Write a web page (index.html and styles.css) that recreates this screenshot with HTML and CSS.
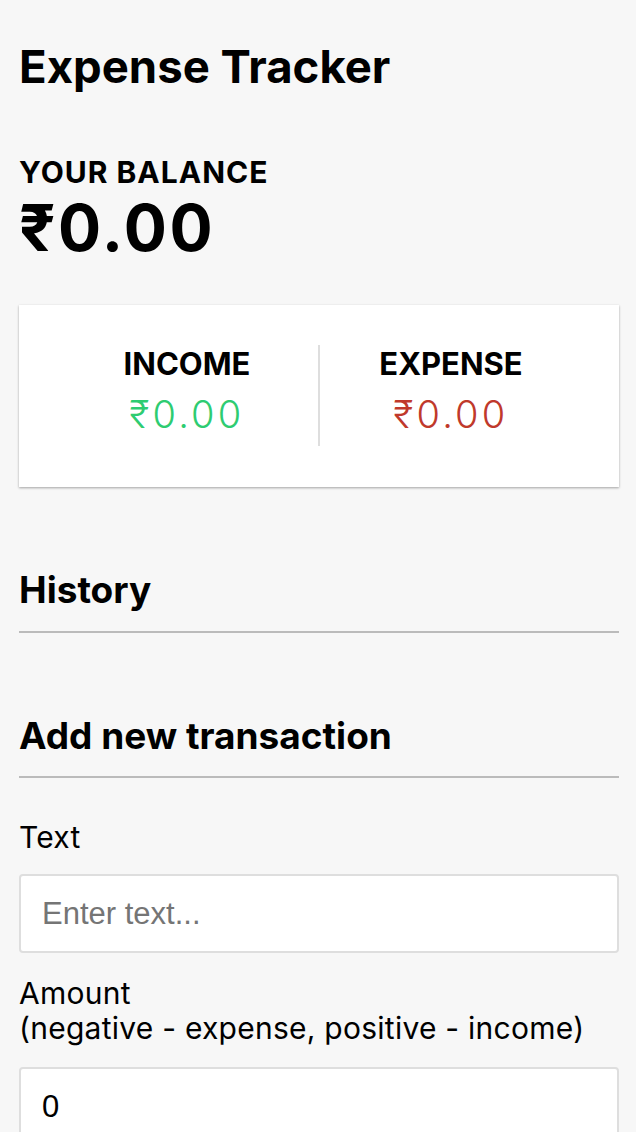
FILE: index.html
```html
<!DOCTYPE html>
<html lang="en">
<head>
<meta charset="UTF-8">
<title>Expense Tracker</title>
<link rel="stylesheet" href="styles.css">
</head>
<body>
<div class="container">
  <h1 class="title">Expense Tracker</h1>
  <h4 class="balance-label">Your Balance</h4>
  <div class="balance">₹0.00</div>
  <div class="inc-exp">
    <div class="col col-first">
      <h4 class="col-label">Income</h4>
      <p class="money plus">₹0.00</p>
    </div>
    <div class="col">
      <h4 class="col-label">Expense</h4>
      <p class="money minus">₹0.00</p>
    </div>
  </div>
  <h3 class="section section-history">History</h3>
  <ul class="list"></ul>
  <h3 class="section section-add">Add new transaction</h3>
  <form class="form">
    <div class="field">
      <label class="label" for="text">Text</label>
      <input class="input" type="text" id="text" placeholder="Enter text...">
    </div>
    <div class="field field-amount">
      <label class="label" for="amount">Amount <br>(negative - expense, positive - income)</label>
      <input class="input" type="number" id="amount" value="0">
    </div>
  </form>
</div>
</body>
</html>
```

FILE: styles.css
```css
* { box-sizing: border-box; }
body {
  margin: 0;
  background: #f7f7f7;
  font-family: Inter, Roboto, "Liberation Sans", sans-serif;
  color: #000;
}
.container {
  width: 600px;
  margin: 0 0 0 19px;
  padding-top: 39px;
}
.title {
  font-weight: 700;
  font-size: 45.5px;
  line-height: 56px;
  margin: 0;
}
.balance-label {
  font-weight: 700;
  font-size: 30px;
  line-height: 36px;
  letter-spacing: 1px;
  margin: 59px 0 0;
  text-transform: uppercase;
}
.balance {
  font-weight: 700;
  font-size: 64px;
  line-height: 72px;
  letter-spacing: 2.5px;
  margin-top: 2px;
}
.inc-exp {
  background: #fff;
  box-shadow: 0 1px 3px rgba(0,0,0,0.12), 0 1px 2px rgba(0,0,0,0.24);
  display: flex;
  padding: 40px 37px 41px;
  margin-top: 41px;
}
.col {
  flex: 1;
  text-align: center;
}
.col-first { border-right: 2px solid #dedede; }
.col-label {
  margin: 0;
  font-weight: 700;
  font-size: 31px;
  line-height: 38px;
  text-transform: uppercase;
}
.money {
  margin: 6px 0 7px;
  font-weight: 300;
  font-size: 38px;
  line-height: 50px;
  letter-spacing: 3.2px;
}
.plus { color: #2ecc71; }
.minus { color: #c0392b; }
.section {
  font-weight: 700;
  font-size: 37px;
  line-height: 44px;
  margin: 81px 0 0;
  padding-bottom: 19px;
  border-bottom: 2px solid #bbb;
}
.section-add { margin-top: 81px; padding-bottom: 18px; }
.list { margin: 0; padding: 0; list-style: none; }
.form { margin-top: 42px; }
.field { display: flex; flex-direction: column; align-items: flex-start; }
.field-amount { margin-top: 23px; }
.label {
  font-size: 30px;
  line-height: 35px;
  letter-spacing: 0.25px;
  margin: 0 0 19px;
}
.field-amount .label { margin-bottom: 21px; }
.input {
  display: block;
  width: 100%;
  height: 79px;
  border: 2px solid #dedede;
  border-radius: 4px;
  background: #fff;
  padding: 0 21px;
  font-family: "Liberation Sans", Arial, sans-serif;
  font-size: 31px;
  color: #000;
}
.input::placeholder { color: #757575; }
```
